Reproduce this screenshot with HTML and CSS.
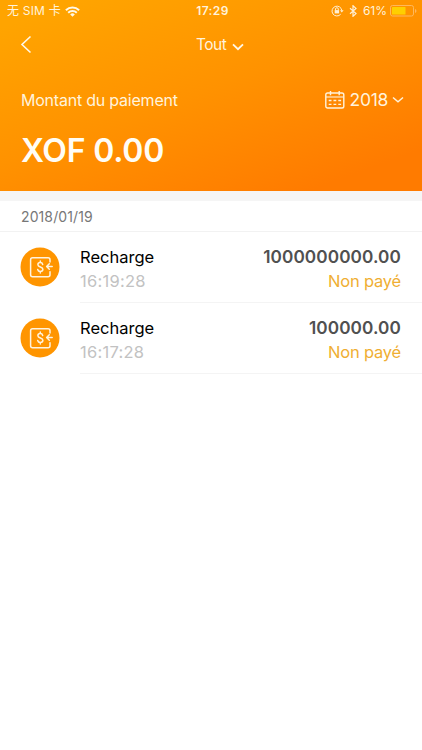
FILE: index.html
```html
<!DOCTYPE html>
<html lang="fr">
<head>
<meta charset="utf-8">
<title>Paiements</title>
<link rel="stylesheet" href="styles.css">
</head>
<body>
<svg class="defs" aria-hidden="true">
  <symbol id="recharge" viewBox="0 0 40 40">
    <circle cx="20" cy="20" r="19.5" fill="#ff9500"/>
    <g fill="none" stroke="#fff3df" stroke-width="1.5" stroke-linecap="round" stroke-linejoin="round">
      <path d="M30 15v-2.300a2 2 0 0 0-2-2H12.600a2 2 0 0 0-2 2v15a2 2 0 0 0 2 2H28a2 2 0 0 0 2-2v-3"/>
      <path d="M32.200 19.500h-5.400M29.300 16.800l-2.700 2.700 2.700 2.700"/>
      <path d="M22.700 17.500c-.3-1.300-1.200-1.900-2.400-1.900-1.400 0-2.400.8-2.400 2.100 0 3 5 1.600 5 4.600 0 1.400-1.100 2.200-2.600 2.200-1.300 0-2.300-.7-2.600-2M20.300 14v1.500M20.300 24.600V26"/>
    </g>
  </symbol>
</svg>
<header class="header">
  <div class="status">
    <div class="status-left">
      <span class="carrier">无 SIM 卡</span>
      <svg class="wifi" width="15" height="11" viewBox="0 0 15 11" fill="none" stroke="#fff8e8" stroke-width="2">
        <path d="M.9 4.200a9.600 9.600 0 0 1 13.200 0M3.200 6.700a6.200 6.200 0 0 1 8.600 0"/>
        <path d="M7.500 10.700L5.200 8.400a3.300 3.300 0 0 1 4.600 0z" fill="#fff8e8" stroke="none"/>
      </svg>
    </div>
    <span class="clock">17:29</span>
    <div class="status-right">
      <svg width="13" height="12" viewBox="0 0 13 12" fill="none" stroke="#fff0d5">
        <path d="M9.700 9.200A4.900 4.900 0 1 1 10.800 5.500"/>
        <path d="M9 5.200h3.600l-1.800 2.200z" fill="#fff0d5" stroke="none"/>
        <path d="M4.500 5.300V4.100a1.400 1.400 0 0 1 2.800 0v1.200"/>
        <path d="M3.700 5.100h4.400v3.300H3.700z" fill="#fff0d5" stroke="none"/>
      </svg>
      <svg class="bluetooth" width="8" height="12" viewBox="0 0 8 12" fill="none" stroke="#fff0d5" stroke-width="1.200">
        <path d="M1 3.200l6 5.400-3 2.700V.7l3 2.700-6 5.400"/>
      </svg>
      <span class="percent">61%</span>
      <svg width="27" height="12" viewBox="0 0 27 12">
        <rect x=".5" y=".5" width="23" height="10.500" rx="2" fill="none" stroke="#ffb85c"/>
        <rect x="2" y="2" width="13.500" height="7.500" rx=".6" fill="#ffcf00"/>
        <path d="M25 4v4q1.500-.7 1.500-2T25 4" fill="#ffb85c"/>
      </svg>
    </div>
  </div>
  <nav class="nav">
    <svg class="back" width="12" height="19" viewBox="0 0 12 19" fill="none" stroke="#fff8e8" stroke-width="1.600"><path d="M10.500 1.500L2 9.500l8.500 8"/></svg>
    <span class="filter">Tout</span>
    <svg class="filter-arrow" width="12" height="8" viewBox="0 0 12 8" fill="none" stroke="#fff8e8" stroke-width="1.800"><path d="M1 1.300l5 4.900 5-4.900"/></svg>
  </nav>
  <div class="summary">
    <span class="label">Montant du paiement</span>
    <div class="year">
      <svg width="20" height="18" viewBox="0 0 20 18" fill="none" stroke="#fff3dc" stroke-width="1.400">
        <rect x=".8" y="2" width="18" height="15" rx="1.800"/>
        <path d="M1 6h17.600" stroke-width="1.100"/>
        <path d="M5.500 0v4.200M14.200 0v4.200"/>
        <path d="M3.700 9.500h2.800m2 0h2.800m2 0h2.800M3.700 13.300h2.800m2 0h2.800m2 0h2.800" stroke-width="1.300"/>
      </svg>
      <span class="year-text">2018</span>
      <svg class="year-arrow" width="12" height="8" viewBox="0 0 12 8" fill="none" stroke="#fff3dc" stroke-width="1.500"><path d="M1 1.500l5 4.200 5-4.200"/></svg>
    </div>
  </div>
  <div class="total">XOF 0.00</div>
</header>
<main>
  <div class="date"><span>2018/01/19</span></div>
  <section class="item">
    <svg class="icon"><use href="#recharge"/></svg>
    <div class="details">
      <div class="line"><span class="name">Recharge</span><span class="amount">1000000000.00</span></div>
      <div class="line second"><span class="time">16:19:28</span><span class="state">Non payé</span></div>
    </div>
  </section>
  <section class="item">
    <svg class="icon"><use href="#recharge"/></svg>
    <div class="details">
      <div class="line"><span class="name">Recharge</span><span class="amount">100000.00</span></div>
      <div class="line second"><span class="time">16:17:28</span><span class="state">Non payé</span></div>
    </div>
  </section>
</main>
</body>
</html>
```
FILE: styles.css
```css
* { box-sizing: border-box; }
body {
  margin: 0;
  min-height: 750px;
  background: #fff;
  font-family: Inter, "Noto Sans CJK SC", sans-serif;
  white-space: nowrap;
}
svg { display: block; flex: none; }
.defs { display: none; }
.header {
  height: 191px;
  color: #fff3dc;
  background: linear-gradient(160deg, #ffa400 8%, #ff9200 48%, #ff7b00 88%);
}
.status {
  height: 22px;
  display: grid;
  grid-template-columns: 1fr auto 1fr;
  align-items: center;
  padding: 0 5px 0 7px;
  font-size: 12px;
  line-height: 22px;
}
.status-left, .status-right { display: flex; align-items: center; }
.status-right { justify-content: flex-end; }
.carrier { width: 53px; letter-spacing: .2px; }
.wifi { margin-left: 5px; }
.clock { padding-left: 1px; font-weight: 600; letter-spacing: .4px; }
.bluetooth { margin-left: 5px; }
.percent { margin: 0 3px 0 6px; }
.nav {
  height: 44px;
  display: flex;
  align-items: center;
  padding-left: 20px;
}
.filter { margin-left: 164px; font-size: 15.500px; letter-spacing: -.5px; }
.filter-arrow { margin: 5px 0 0 6px; }
.summary {
  height: 67px;
  display: flex;
  align-items: center;
  justify-content: space-between;
  padding: 0 18px 0 21px;
}
.label { font-size: 16px; letter-spacing: -.22px; }
.year { display: flex; align-items: center; }
.year-text { margin-left: 5px; font-size: 17.500px; line-height: 20px; letter-spacing: -.3px; }
.year-arrow { margin-left: 4px; }
.total {
  padding-left: 21px;
  font-size: 32px;
  line-height: 36px;
  font-weight: 600;
  letter-spacing: -.2px;
  color: #fffdf5;
}
.date {
  height: 41px;
  border-top: 10px solid #f5f5f5;
  border-bottom: 1px solid #f2f2f2;
  padding-left: 21px;
  font-size: 14px;
  letter-spacing: .1px;
  line-height: 31px;
  color: #777;
}
.item { height: 71px; display: flex; padding-left: 20px; }
.icon { width: 40px; height: 40px; margin-top: 15px; }
.details {
  flex: 1;
  margin-left: 20px;
  padding: 13px 21px 0 0;
  border-bottom: 1px solid #f4f4f4;
}
.line { display: flex; justify-content: space-between; line-height: 24px; }
.name { color: #000; font-size: 16.500px; }
.amount { color: #505050; font-size: 17.200px; font-weight: 600; letter-spacing: .1px; }
.second { line-height: 25px; }
.time { color: #c2c2c2; font-size: 16.500px; letter-spacing: .25px; }
.state { color: #efae32; font-size: 16.500px; letter-spacing: -.2px; }
```
